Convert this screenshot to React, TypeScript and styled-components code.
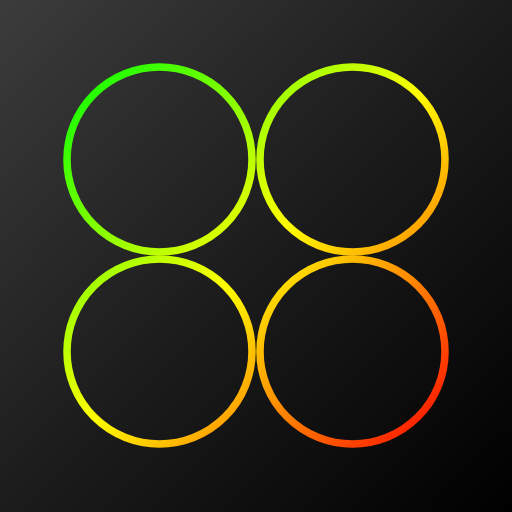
import { createGlobalStyle, styled } from "styled-components";

const GlobalStyle = createGlobalStyle`
  html, body {
    margin: 0;
    padding: 0;
    background: #000;
  }
`;

const rings = [
  { cx: 159.5, cy: 159.5 },
  { cx: 352.5, cy: 159.5 },
  { cx: 159.5, cy: 351.5 },
  { cx: 352.5, cy: 351.5 },
];

const App = () => {
  return (
    <>
      <GlobalStyle />
      <Tile>
        <Logo viewBox="0 0 512 512" width="512" height="512">
          <defs>
            <linearGradient id="ringGrad" gradientUnits="userSpaceOnUse" x1="64" y1="64" x2="448" y2="448">
              <stop offset="0" stopColor="#00ff00" />
              <stop offset="0.5" stopColor="#ffff00" />
              <stop offset="1" stopColor="#ff0000" />
            </linearGradient>
          </defs>
          {rings.map((r, i) => (
            <circle key={i} cx={r.cx} cy={r.cy} r={92.5} fill="none" stroke="url(#ringGrad)" strokeWidth={7.5} />
          ))}
        </Logo>
      </Tile>
    </>
  );
};

export default App;

const Tile = styled.div`
  width: 512px;
  height: 512px;
  background: linear-gradient(135deg, #3c3c3c 0%, #1c1c1c 50%, #000 100%);
`;

const Logo = styled.svg`
  display: block;
`;
